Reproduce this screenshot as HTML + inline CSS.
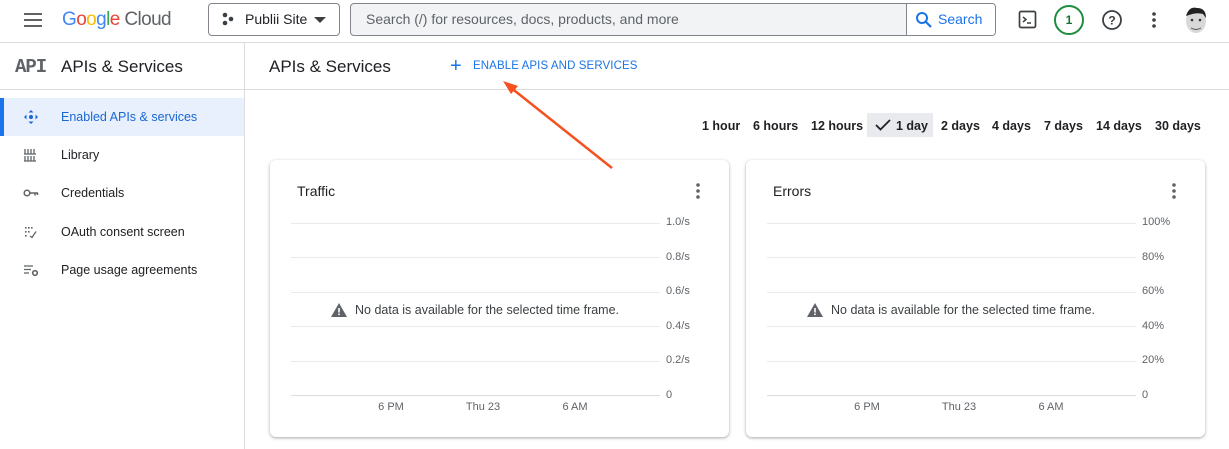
<!DOCTYPE html>
<html><head><style>
*{box-sizing:border-box;margin:0;padding:0}
body{width:1229px;height:449px;overflow:hidden;background:#fff;font-family:"Liberation Sans",Arial,sans-serif;color:#202124;position:relative}
.a{position:absolute}
.hdr{top:0;left:0;width:1229px;height:43px;border-bottom:1px solid #dadce0}
.side{top:43px;left:0;width:245px;height:406px;border-right:1px solid #dadce0}
.nav{position:absolute;left:0;width:244px;height:38px;font-size:12.5px;display:flex;align-items:center;padding-left:61px;color:#202124}
.ico{position:absolute;left:23px;top:12px;width:16px;height:14px}
.card{background:#fff;border-radius:6px;box-shadow:0 1px 2px rgba(60,64,67,.3),0 1px 3px 1px rgba(60,64,67,.12)}
.gl{position:absolute;height:1px;background:#e8eaed;width:369px}
.yl{position:absolute;font-size:11px;color:#5f6368}
.xl{position:absolute;font-size:11px;color:#5f6368;width:60px;text-align:center}
.tr{position:absolute;top:116px;font-size:12.5px;font-weight:bold;color:#202124;height:20px;line-height:20px}
</style></head><body>
<div class="a hdr"></div>
<div class="a" style="left:24px;top:13px;width:18px;height:2px;background:#5f6368;box-shadow:0 6px 0 #5f6368,0 12px 0 #5f6368"></div>
<div class="a" style="left:62px;top:9px;font-size:19px;letter-spacing:-0.6px"><span style="color:#4285f4">G</span><span style="color:#ea4335">o</span><span style="color:#fbbc04">o</span><span style="color:#4285f4">g</span><span style="color:#34a853">l</span><span style="color:#ea4335">e</span> <span style="color:#5f6368">Cloud</span></div>
<div class="a" style="left:208px;top:3px;width:132px;height:33px;border:1px solid #80868b;border-radius:4px"></div>
<svg class="a" style="left:221px;top:12px" width="14" height="14"><circle cx="4" cy="3" r="2.3" fill="#3c4043"/><circle cx="4" cy="11" r="2.3" fill="#3c4043"/><circle cx="10" cy="7" r="2.3" fill="#3c4043"/></svg>
<div class="a" style="left:245px;top:11px;font-size:14px">Publii Site</div>
<div class="a" style="left:314px;top:17px;border-left:6px solid transparent;border-right:6px solid transparent;border-top:6px solid #3c4043"></div>
<div class="a" style="left:350px;top:3px;width:646px;height:33px;border:1px solid #80868b;border-radius:4px;background:#f1f3f4"></div>
<div class="a" style="left:906px;top:4px;width:89px;height:31px;background:#fff;border-left:1px solid #80868b;border-radius:0 3px 3px 0"></div>
<div class="a" style="left:366px;top:11px;font-size:14px;color:#5f6368">Search (/) for resources, docs, products, and more</div>
<svg class="a" style="left:915px;top:11px" width="18" height="18"><circle cx="7" cy="7" r="5" stroke="#1a73e8" stroke-width="2" fill="none"/><line x1="10.5" y1="10.5" x2="16" y2="16" stroke="#1a73e8" stroke-width="2.2"/></svg>
<div class="a" style="left:938px;top:11px;font-size:14px;color:#1a73e8">Search</div>
<svg class="a" style="left:1018px;top:10px" width="20" height="20"><rect x="1.5" y="1.5" width="16" height="16" rx="1.5" fill="none" stroke="#3c4043" stroke-width="1.7"/><path d="M5 7l3 2.5-3 2.5M9 13h4" stroke="#3c4043" stroke-width="1.5" fill="none"/></svg>
<div class="a" style="left:1054px;top:5px;width:30px;height:30px;border:2px solid #1e8e3e;border-radius:50%;text-align:center;line-height:26px;font-size:12px;font-weight:bold;color:#137333">1</div>
<svg class="a" style="left:1101px;top:9px" width="22" height="22"><circle cx="11" cy="11" r="9" fill="none" stroke="#3c4043" stroke-width="1.8"/><text x="11" y="15.5" font-size="12" font-weight="bold" text-anchor="middle" fill="#3c4043" font-family="Liberation Sans">?</text></svg>
<svg class="a" style="left:1150px;top:11px" width="8" height="18"><circle cx="4" cy="3" r="1.8" fill="#3c4043"/><circle cx="4" cy="9" r="1.8" fill="#3c4043"/><circle cx="4" cy="15" r="1.8" fill="#3c4043"/></svg>
<svg class="a" style="left:1181px;top:4px" width="30" height="32"><ellipse cx="15" cy="17" rx="10" ry="12" fill="#d8d8d8"/><path d="M5 12 Q8 2 16 4 Q25 4 25 14 L22 10 Q15 8 8 11Z" fill="#222"/><circle cx="11" cy="16" r="1.3" fill="#333"/><circle cx="19" cy="16" r="1.3" fill="#333"/><path d="M10 24 Q15 27 20 24" stroke="#555" fill="none"/></svg>

<div class="a side"></div>
<div class="a" style="left:0;top:89px;width:1229px;height:1px;background:#dadce0"></div>
<div class="a" style="left:15px;top:56px;font-family:'Liberation Mono',monospace;font-size:19px;font-weight:bold;color:#5f6368;letter-spacing:-1px">API</div>
<div class="a" style="left:61px;top:57px;font-size:17px">APIs &amp; Services</div>
<div class="a" style="left:269px;top:57px;font-size:17px">APIs &amp; Services</div>
<div class="a" style="left:450px;top:57px;font-size:20px;color:#1a73e8;line-height:18px">+</div>
<div class="a" style="left:473px;top:60px;font-size:11.5px;color:#1a73e8;letter-spacing:.1px">ENABLE APIS AND SERVICES</div>

<div class="nav" style="top:98px;background:#e8f0fe;color:#1967d2"><span class="a" style="left:0;top:0;width:4px;height:38px;background:#1a73e8"></span>
<svg class="ico" viewBox="0 0 16 14"><path d="M8 0l2.5 2.5h-5zM8 14l2.5-2.5h-5zM1 7l2.5-2.5v5zM15 7l-2.5-2.5v5z" fill="#1967d2"/><circle cx="8" cy="7" r="2" fill="#1967d2"/></svg>Enabled APIs &amp; services</div>
<div class="nav" style="top:136px"><svg class="ico" viewBox="0 0 16 14"><path d="M2 1v5M5 1v5M8 1v5M11 1v5M2 8v5M5 8v5M8 8v5M11 8v5M1 6h12M1 13h12" stroke="#5f6368" stroke-width="1.3"/></svg>Library</div>
<div class="nav" style="top:174px"><svg class="ico" viewBox="0 0 16 14"><circle cx="4" cy="7" r="2.8" fill="none" stroke="#5f6368" stroke-width="1.5"/><path d="M7 7h8M12 7v2.5M14.5 7v2" stroke="#5f6368" stroke-width="1.5"/></svg>Credentials</div>
<div class="nav" style="top:213px"><svg class="ico" viewBox="0 0 16 14"><g fill="#5f6368"><rect x="2" y="2" width="1.6" height="1.6"/><rect x="5" y="2" width="1.6" height="1.6"/><rect x="8" y="2" width="1.6" height="1.6"/><rect x="2" y="6" width="1.6" height="1.6"/><rect x="5" y="6" width="1.6" height="1.6"/><rect x="2" y="10" width="1.6" height="1.6"/></g><path d="M7 11l2 1.5 4-6" stroke="#5f6368" stroke-width="1.3" fill="none"/></svg>OAuth consent screen</div>
<div class="nav" style="top:251px"><svg class="ico" viewBox="0 0 16 14"><path d="M1 3h9M1 6.5h7M1 10h5" stroke="#5f6368" stroke-width="1.3"/><circle cx="12" cy="10" r="2.3" fill="none" stroke="#5f6368" stroke-width="1.6"/></svg>Page usage agreements</div>

<div class="a" style="left:867px;top:113px;width:66px;height:24px;background:#e8eaed"></div>
<div class="tr" style="left:702px">1 hour</div>
<div class="tr" style="left:753px">6 hours</div>
<div class="tr" style="left:811px">12 hours</div>
<svg class="a" style="left:875px;top:119px" width="16" height="12"><path d="M1 6l4.5 4.5L15 1" stroke="#202124" stroke-width="1.8" fill="none"/></svg>
<div class="tr" style="left:896px">1 day</div>
<div class="tr" style="left:941px">2 days</div>
<div class="tr" style="left:992px">4 days</div>
<div class="tr" style="left:1044px">7 days</div>
<div class="tr" style="left:1096px">14 days</div>
<div class="tr" style="left:1155px">30 days</div>

<div class="a card" style="left:270px;top:160px;width:459px;height:277px"></div>
<div class="a card" style="left:746px;top:160px;width:459px;height:277px"></div>

<div class="a" style="left:297px;top:183px;font-size:14px">Traffic</div>
<div class="a" style="left:773px;top:183px;font-size:14px">Errors</div>
<svg class="a" style="left:694px;top:182px" width="8" height="18"><circle cx="4" cy="3" r="1.8" fill="#5f6368"/><circle cx="4" cy="9" r="1.8" fill="#5f6368"/><circle cx="4" cy="15" r="1.8" fill="#5f6368"/></svg>
<svg class="a" style="left:1170px;top:182px" width="8" height="18"><circle cx="4" cy="3" r="1.8" fill="#5f6368"/><circle cx="4" cy="9" r="1.8" fill="#5f6368"/><circle cx="4" cy="15" r="1.8" fill="#5f6368"/></svg>

<div class="gl" style="left:291px;top:223px"></div><div class="gl" style="left:291px;top:257px"></div><div class="gl" style="left:291px;top:292px"></div><div class="gl" style="left:291px;top:326px"></div><div class="gl" style="left:291px;top:361px"></div><div class="gl" style="left:291px;top:395px;background:#dadce0"></div>
<div class="gl" style="left:767px;top:223px"></div><div class="gl" style="left:767px;top:257px"></div><div class="gl" style="left:767px;top:292px"></div><div class="gl" style="left:767px;top:326px"></div><div class="gl" style="left:767px;top:361px"></div><div class="gl" style="left:767px;top:395px;background:#dadce0"></div>

<div class="yl" style="left:666px;top:216px">1.0/s</div><div class="yl" style="left:666px;top:251px">0.8/s</div><div class="yl" style="left:666px;top:285px">0.6/s</div><div class="yl" style="left:666px;top:320px">0.4/s</div><div class="yl" style="left:666px;top:354px">0.2/s</div><div class="yl" style="left:666px;top:389px">0</div>
<div class="yl" style="left:1142px;top:216px">100%</div><div class="yl" style="left:1142px;top:251px">80%</div><div class="yl" style="left:1142px;top:285px">60%</div><div class="yl" style="left:1142px;top:320px">40%</div><div class="yl" style="left:1142px;top:354px">20%</div><div class="yl" style="left:1142px;top:389px">0</div>

<div class="xl" style="left:361px;top:401px">6 PM</div><div class="xl" style="left:453px;top:401px">Thu 23</div><div class="xl" style="left:545px;top:401px">6 AM</div>
<div class="xl" style="left:837px;top:401px">6 PM</div><div class="xl" style="left:929px;top:401px">Thu 23</div><div class="xl" style="left:1021px;top:401px">6 AM</div>

<svg class="a" style="left:331px;top:303px" width="16" height="14"><path d="M8 0L16 14H0Z" fill="#5f6368"/><rect x="7.2" y="5" width="1.6" height="4.5" fill="#fff"/><rect x="7.2" y="10.5" width="1.6" height="1.6" fill="#fff"/></svg>
<div class="a" style="left:355px;top:303px;font-size:12.5px;color:#3c4043">No data is available for the selected time frame.</div>
<svg class="a" style="left:807px;top:303px" width="16" height="14"><path d="M8 0L16 14H0Z" fill="#5f6368"/><rect x="7.2" y="5" width="1.6" height="4.5" fill="#fff"/><rect x="7.2" y="10.5" width="1.6" height="1.6" fill="#fff"/></svg>
<div class="a" style="left:831px;top:303px;font-size:12.5px;color:#3c4043">No data is available for the selected time frame.</div>

<svg class="a" style="left:0;top:0" width="1229" height="449"><line x1="612" y1="168" x2="510" y2="87" stroke="#f4511e" stroke-width="2.5"/><path d="M503 81L518 86L511 94Z" fill="#f4511e"/></svg>
</body></html>
